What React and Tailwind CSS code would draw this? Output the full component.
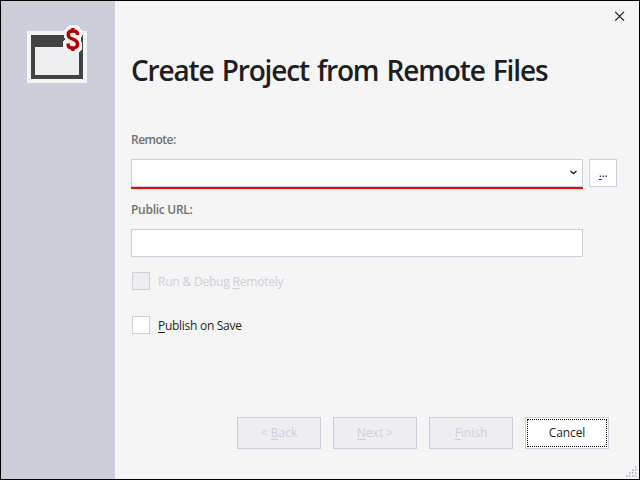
import React from "react";

function ProjectIcon() {
  return (
    <svg className="block" width="60" height="60" viewBox="0 0 60 60" shapeRendering="crispEdges">
      <rect x="0" y="8" width="60" height="52" fill="#f5f5f5" />
      <rect x="4" y="12" width="52" height="44" fill="#424242" />
      <rect x="8" y="24" width="44" height="28" fill="#efeff2" />
      <path d="M42 2h8l3 3 2 3v5l-1 2v3l1 2v6l-2 3-4 2h-7l-4-3-2-3v-6l2-3-1-2V8l2-3z" fill="#f5f5f5" />
      <path
        d="M50.5 12V11Q50.5 8 45.8 8Q41.2 8 41.2 11.5Q41.2 14.5 45.8 16.2Q50.5 18 50.5 21.3Q50.5 25 45.8 25Q41.2 25 41.2 22V20.5M45.8 5v3M45.8 25v3"
        fill="none"
        stroke="#b00000"
        strokeWidth="3.4"
        shapeRendering="auto"
      />
    </svg>
  );
}

function CloseIcon() {
  return (
    <svg className="block" width="10" height="10" viewBox="0 0 10 10">
      <path d="M.2.9l8.8 8.8M9 .9L.2 9.7" fill="none" stroke="#1e1e1e" strokeWidth="1.2" />
    </svg>
  );
}

const gripDots = [
  [9, 0], [6, 3], [9, 3], [3, 6], [6, 6], [9, 6], [0, 9], [3, 9], [6, 9], [9, 9],
];

function ResizeGrip() {
  return (
    <svg className="absolute right-[2px] bottom-[2px]" width="11" height="11" viewBox="0 0 11 11" shapeRendering="crispEdges">
      {gripDots.map(([x, y]) => (
        <g key={`${x}-${y}`}>
          <rect x={x} y={y} width="2" height="2" fill="#d5dbe5" />
          <rect x={x} y={y} width="1" height="2" fill="#b5becd" />
        </g>
      ))}
    </svg>
  );
}

function Key({ children }) {
  return <span className="underline decoration-1 underline-offset-2">{children}</span>;
}

function WizardButton({ children }) {
  return (
    <button disabled className="h-8 w-21 border border-[#cccedb] bg-[#eeeef2] text-[#ccceda]">
      {children}
    </button>
  );
}

export default function App() {
  return (
    <div className="relative flex h-[480px] w-[640px] overflow-hidden border border-black bg-[#f5f5f5] font-['Open_Sans','Noto_Sans',sans-serif] text-[12px] leading-4 text-[#1e1e1e]">
      <aside className="w-[114px] shrink-0 bg-[#ccceda] pt-[22px] pl-[26px]">
        <ProjectIcon />
      </aside>
      <main className="flex flex-1 flex-col pl-4">
        <div className="flex h-[30px] justify-end pt-[10px] pr-[14px]">
          <button className="h-[10px]"><CloseIcon /></button>
        </div>
        <h1 className="mt-[19px] h-10 text-[28px] leading-10 font-semibold tracking-[-1.15px] whitespace-nowrap [word-spacing:2px]">
          Create Project from Remote Files
        </h1>
        <label className="mt-[42px] h-4 font-semibold tracking-[-0.5px] text-[#717171]">Remote:</label>
        <div className="mt-[11px] flex gap-[6px]">
          <div className="h-[30px] w-[452px] border-b-2 border-[#ff0000]">
            <div className="flex h-7 items-center justify-end border border-[#ccceda] bg-white pr-[5px]">
              <svg className="mb-[2px]" width="7" height="5" viewBox="0 0 7 5">
                <path d="M.5.9l3 2.7 3-2.7" fill="none" stroke="#1e1e1e" strokeWidth="1.4" />
              </svg>
            </div>
          </div>
          <button className="h-7 w-7 border border-[#ccceda] bg-white tracking-[-0.4px]"><Key>.</Key>..</button>
        </div>
        <label className="mt-[13px] h-4 font-semibold tracking-[-0.28px] text-[#717171]">Public URL:</label>
        <input className="mt-[11px] h-7 w-[452px] border border-[#ccceda] bg-white" />
        <div className="mt-[15px] ml-px flex h-[18px] items-center gap-2 tracking-[-0.2px] text-[#ccceda]">
          <span className="h-[18px] w-[18px] border border-[#ccceda] bg-[#eeeef2]" />
          <span className="pt-[2px]">Run &amp; Debug <Key>R</Key>emotely</span>
        </div>
        <div className="mt-[26px] ml-px flex h-[18px] items-center gap-2 tracking-[-0.28px]">
          <span className="h-[18px] w-[18px] border border-[#ccceda] bg-white" />
          <span className="pt-[2px]"><Key>P</Key>ublish on Save</span>
        </div>
        <div className="mt-[83px] flex justify-end gap-3 pr-[30px]">
          <WizardButton>&lt; <Key>B</Key>ack</WizardButton>
          <WizardButton><Key>N</Key>ext &gt;</WizardButton>
          <WizardButton><Key>F</Key>inish</WizardButton>
          <button className="h-8 w-21 border border-[#ccceda] bg-white p-px">
            <span className="flex h-full items-center justify-center border border-dotted border-black tracking-[-0.1px]">Cancel</span>
          </button>
        </div>
      </main>
      <ResizeGrip />
    </div>
  );
}
